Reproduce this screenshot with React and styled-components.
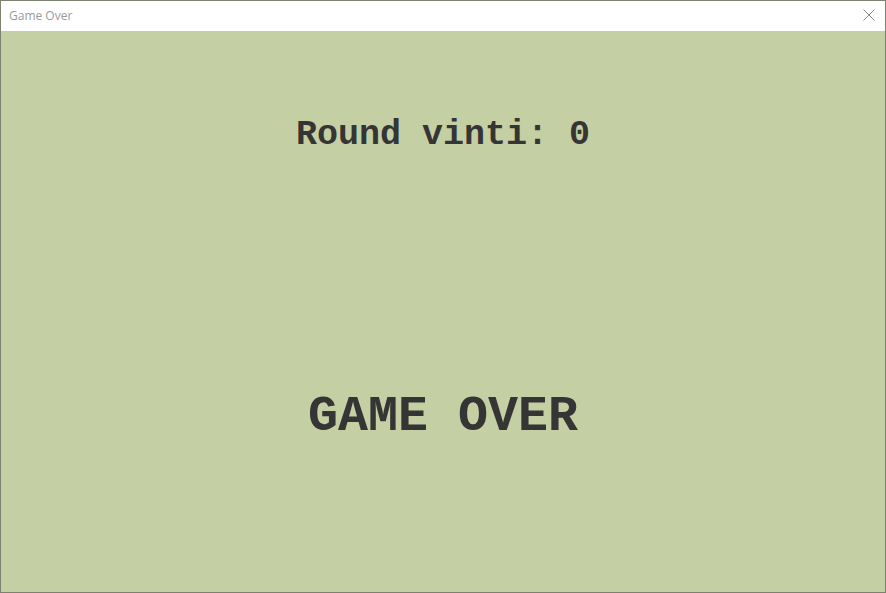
import React from "react";
import styled, { createGlobalStyle } from "styled-components";

const GlobalStyle = createGlobalStyle`
  html, body {
    margin: 0;
    padding: 0;
    background: #ffffff;
  }
`;

const Window = styled.div`
  width: 886px;
  height: 593px;
  box-sizing: border-box;
  border: 1px solid #7d8270;
  display: flex;
  flex-direction: column;
  overflow: hidden;
`;

const TitleBar = styled.div`
  height: 30px;
  flex-shrink: 0;
  background: #ffffff;
  display: flex;
  align-items: center;
  justify-content: space-between;
  padding: 0 8px 0 8px;
`;

const Title = styled.span`
  font-family: "Open Sans", "Liberation Sans", sans-serif;
  font-size: 12px;
  color: #9a9a9a;
  margin-top: -1px;
`;

const CloseButton = styled.button`
  border: none;
  background: none;
  padding: 0;
  margin-right: 1px;
  margin-top: -2px;
  width: 14px;
  height: 14px;
  display: flex;
  align-items: center;
  justify-content: center;
`;

const Content = styled.div`
  flex: 1;
  background: #c4cfa3;
  display: flex;
  flex-direction: column;
  align-items: center;
  padding-top: 84px;
`;

const monoStack = `"Courier New", "Nimbus Mono PS", "FreeMono", "Liberation Mono", monospace`;

const Score = styled.div`
  font-family: ${monoStack};
  font-weight: bold;
  font-size: 35px;
  line-height: 40px;
  color: #353535;
  white-space: pre;
`;

const GameOver = styled.div`
  font-family: ${monoStack};
  font-weight: bold;
  font-size: 50px;
  line-height: 56px;
  color: #353535;
  margin-top: 234px;
  white-space: pre;
`;

export default function App() {
  return (
    <>
      <GlobalStyle />
      <Window>
        <TitleBar>
          <Title>Game Over</Title>
          <CloseButton>
            <svg width="12" height="12" viewBox="0 0 12 12">
              <path d="M0.5 0.5 L11.5 11.5 M11.5 0.5 L0.5 11.5" stroke="#8a8a8a" strokeWidth="1" fill="none" />
            </svg>
          </CloseButton>
        </TitleBar>
        <Content>
          <Score>Round vinti: 0</Score>
          <GameOver>GAME OVER</GameOver>
        </Content>
      </Window>
    </>
  );
}
